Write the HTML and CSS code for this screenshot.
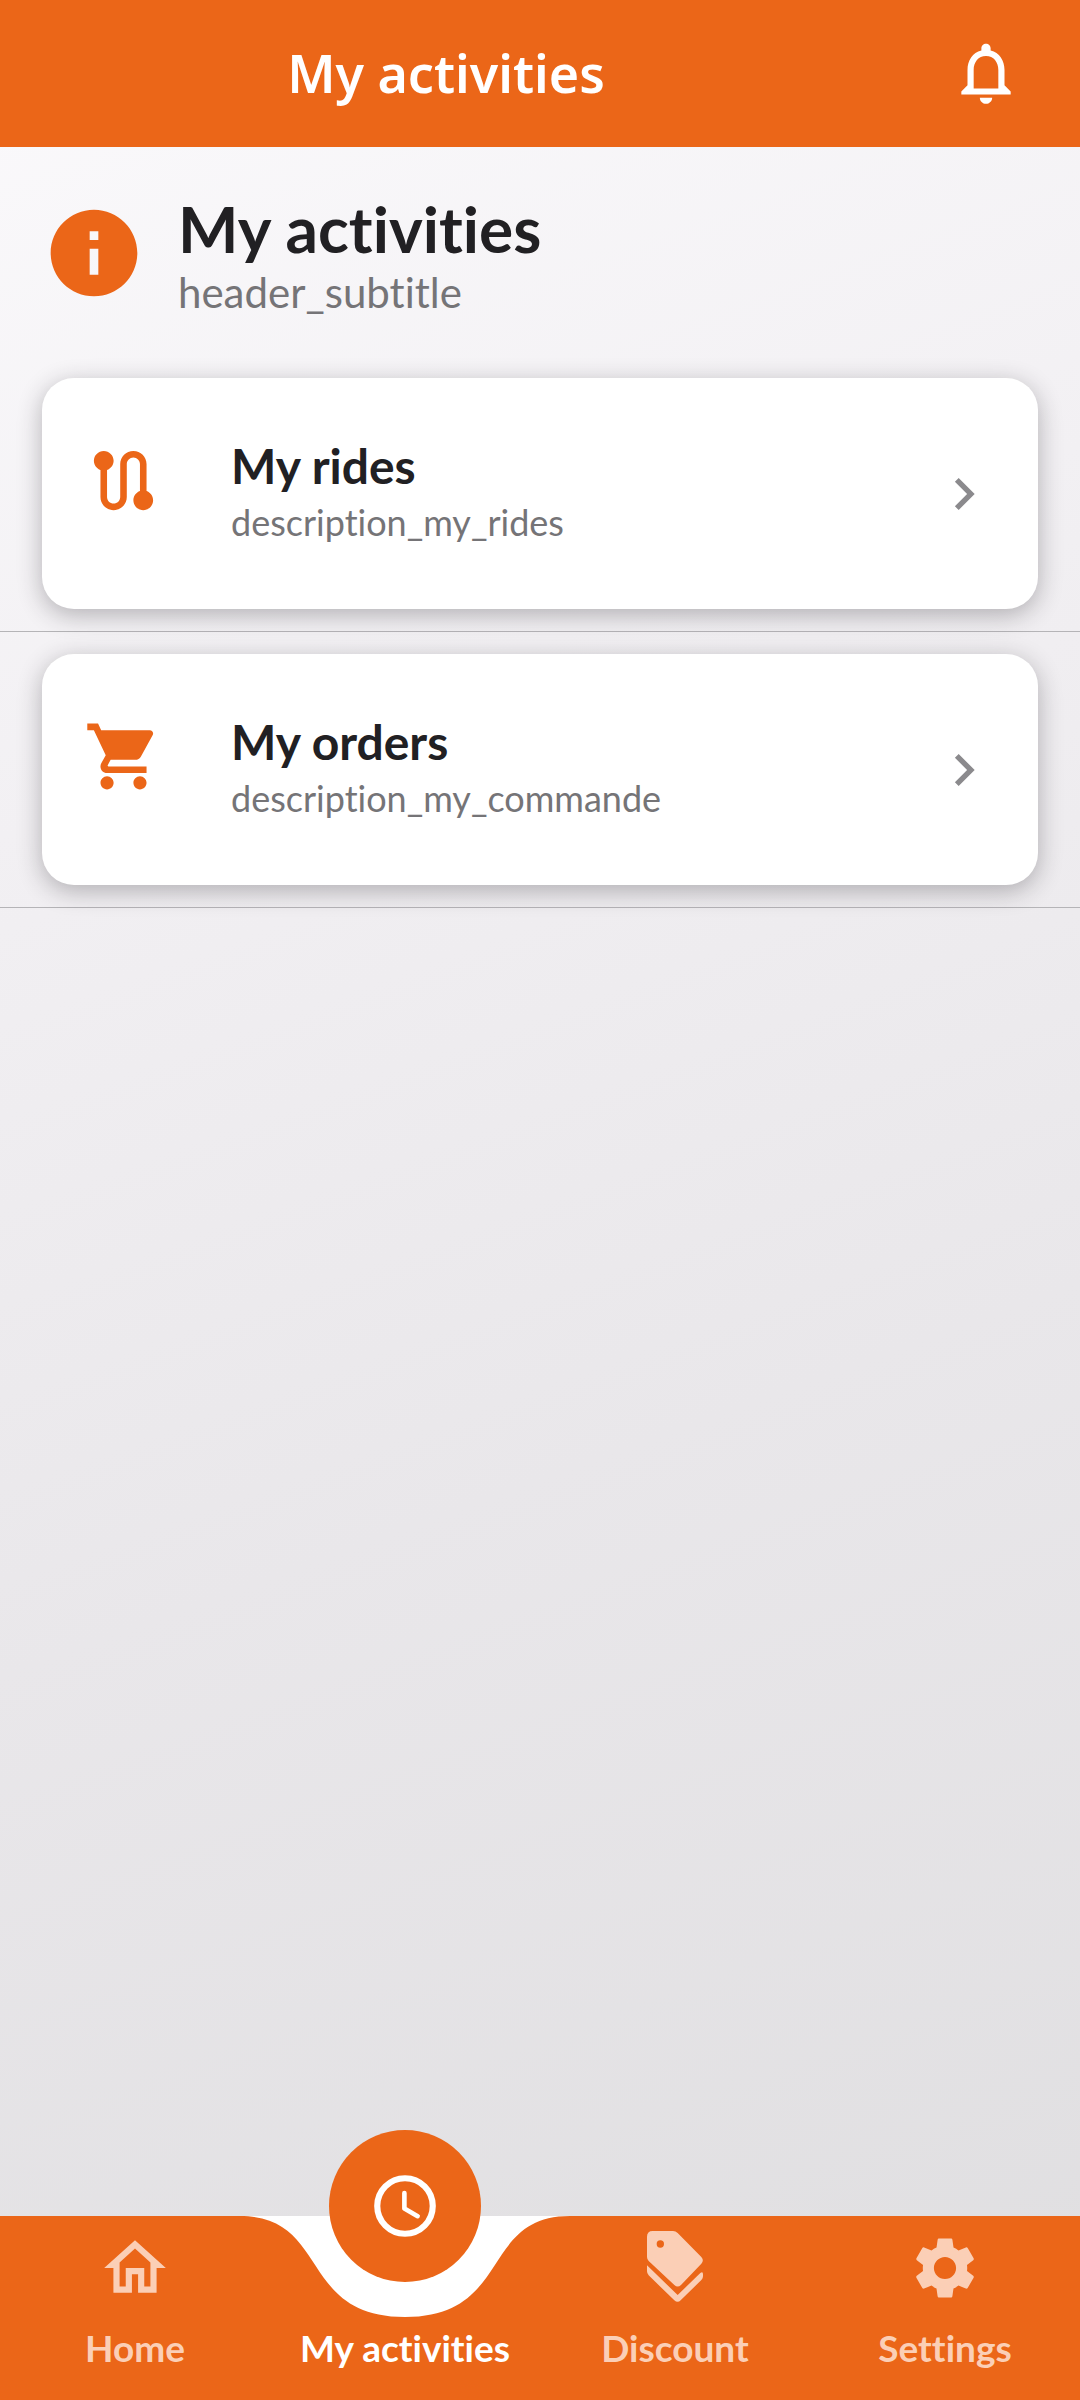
FILE: index.html
```
<!DOCTYPE html>
<html lang="en">
<head>
<meta charset="utf-8">
<meta name="viewport" content="width=device-width, initial-scale=1">
<title>My activities</title>
<link rel="stylesheet" href="styles.css">
</head>
<body>
<div class="app">
  <header class="app-bar">
    <p class="app-bar-title">My activities</p>
    <button class="app-bar-action" type="button" aria-label="Notifications">
      <svg class="icon-medium" viewBox="0 0 24 24" aria-hidden="true"><path d="M12 22c1.1 0 2-.9 2-2h-4c0 1.1.9 2 2 2zm6-6v-5c0-3.07-1.63-5.64-4.5-6.32V4c0-.83-.67-1.5-1.5-1.5s-1.5.67-1.5 1.5v.68C7.64 5.36 6 7.92 6 11v5l-2 2v1h16v-1l-2-2zm-2 1H8v-6c0-2.48 1.51-4.5 4-4.5s4 2.02 4 4.5v6z"/></svg>
    </button>
  </header>

  <main class="content">
    <section class="intro">
      <svg class="intro-icon" viewBox="0 0 24 24" aria-hidden="true"><path d="M12 2C6.48 2 2 6.48 2 12s4.480 10 10 10 10-4.480 10-10S17.520 2 12 2zm1 15h-2v-6h2v6zm0-8h-2V7h2v2z"/></svg>
      <div class="intro-text">
        <h1 class="intro-title">My activities</h1>
        <p class="intro-subtitle">header_subtitle</p>
      </div>
    </section>

    <ul class="list">
      <li class="list-item">
        <a class="card" href="#rides">
          <svg class="card-icon" viewBox="0 0 24 24" aria-hidden="true"><path d="M19 15.180V7c0-2.210-1.790-4-4-4s-4 1.790-4 4v10c0 1.100-.900 2-2 2s-2-.900-2-2V8.820C8.160 8.400 9 7.300 9 6c0-1.660-1.340-3-3-3S3 4.340 3 6c0 1.300.840 2.400 2 2.820V17c0 2.210 1.790 4 4 4s4-1.790 4-4V7c0-1.100.900-2 2-2s2 .900 2 2v8.180c-1.160.410-2 1.510-2 2.820 0 1.660 1.340 3 3 3s3-1.340 3-3c0-1.300-.840-2.400-2-2.820z"/></svg>
          <span class="card-text">
            <span class="card-title">My rides</span>
            <span class="card-description">description_my_rides</span>
          </span>
          <svg class="card-chevron" viewBox="0 0 24 24" aria-hidden="true"><path d="M10 6L8.590 7.410 13.170 12l-4.580 4.590L10 18l6-6z"/></svg>
        </a>
      </li>
      <li class="list-item">
        <a class="card" href="#orders">
          <svg class="card-icon" viewBox="0 0 24 24" aria-hidden="true"><path d="M7 18c-1.100 0-1.990.900-1.990 2S5.900 22 7 22s2-.900 2-2-.900-2-2-2zM1 2v2h2l3.600 7.590-1.350 2.450c-.160.280-.250.610-.250.960 0 1.100.900 2 2 2h12v-2H7.420c-.140 0-.250-.110-.250-.250l.030-.120.900-1.630h7.450c.750 0 1.410-.410 1.750-1.030l3.580-6.490c.080-.140.120-.310.120-.480 0-.550-.450-1-1-1H5.210l-.940-2H1zm16 16c-1.100 0-1.990.900-1.990 2s.890 2 1.990 2 2-.900 2-2-.900-2-2-2z"/></svg>
          <span class="card-text">
            <span class="card-title">My orders</span>
            <span class="card-description">description_my_commande</span>
          </span>
          <svg class="card-chevron" viewBox="0 0 24 24" aria-hidden="true"><path d="M10 6L8.590 7.410 13.170 12l-4.580 4.590L10 18l6-6z"/></svg>
        </a>
      </li>
    </ul>
  </main>

  <nav class="tab-bar">
    <a class="tab" href="#home">
      <svg class="icon-medium" viewBox="0 0 24 24" aria-hidden="true"><path d="M12 5.690l5 4.500V18h-2v-6H9v6H7v-7.810l5-4.500M12 3L2 12h3v8h6v-6h2v6h6v-8h3L12 3z"/></svg>
      <span>Home</span>
    </a>
    <a class="tab tab-active" href="#activities" aria-current="page">
      <svg class="tab-notch" viewBox="0 0 330 101" aria-hidden="true"><path d="M0 0C90 0 58 101 165 101S240 0 330 0z"/></svg>
      <span class="tab-bubble">
        <svg class="icon-medium" viewBox="0 0 24 24" aria-hidden="true"><g fill="none" stroke="currentColor"><circle cx="12" cy="12" r="9" stroke-width="2"/><path d="M11.800 7.800V12.800L16.100 15.300" stroke-width="1.500" stroke-linecap="round" stroke-linejoin="round"/></g></svg>
      </span>
      <span>My activities</span>
    </a>
    <a class="tab" href="#discount">
      <svg class="icon-medium" viewBox="0 0 222 222" aria-hidden="true"><g transform="translate(27 0)"><path fill-rule="evenodd" d="M17 0H78Q86 0 92 6L163 78Q172 88 163 98L102 162Q92 171 82 162L5 90Q0 85 0 78V17Q0 0 17 0zM40 28a11 11 0 1 0 0 22a11 11 0 1 0 0-22z"/><path d="M0 103L92 192L160 126Q168 120 168 130V136Q168 142 163 147L101 208Q92 217 82 208L5 133Q0 128 0 121z"/></g></svg>
      <span>Discount</span>
    </a>
    <a class="tab" href="#settings">
      <svg class="icon-medium" viewBox="0 0 24 24" aria-hidden="true"><path d="M19.140 12.940c.040-.300.060-.610.060-.940 0-.320-.020-.640-.070-.940l2.030-1.580c.180-.140.230-.410.120-.610l-1.920-3.320c-.120-.220-.370-.290-.590-.220l-2.390.960c-.500-.380-1.030-.700-1.620-.940L14.400 2.810c-.040-.240-.240-.410-.480-.410h-3.840c-.240 0-.430.170-.470.410L9.250 5.350C8.660 5.590 8.120 5.920 7.630 6.290L5.240 5.330c-.220-.080-.470 0-.590.220L2.740 8.870c-.120.210-.080.470.120.610l2.030 1.580C4.840 11.360 4.800 11.690 4.800 12s.020.640.070.940l-2.030 1.580c-.180.140-.230.410-.120.610l1.920 3.320c.120.220.370.290.590.220l2.390-.960c.500.380 1.030.700 1.620.940l.360 2.540c.050.240.240.410.480.410h3.840c.240 0 .440-.170.470-.410l.360-2.540c.590-.240 1.130-.560 1.620-.940l2.390.960c.220.080.470 0 .590-.220l1.920-3.320c.120-.220.070-.470-.120-.610L19.140 12.940zM12 15.600c-1.980 0-3.600-1.620-3.600-3.600s1.620-3.600 3.600-3.600 3.600 1.620 3.600 3.600-1.620 3.600-3.600 3.600z"/></svg>
      <span>Settings</span>
    </a>
  </nav>
</div>
</body>
</html>
```
FILE: styles.css
```
:root {
  --orange: #eb6618;
  --ink: #212023;
  --muted: #757477;
  --tab-idle: #fbcfb6;
}

* {
  box-sizing: border-box;
}

body,
h1,
p,
ul {
  margin: 0;
  padding: 0;
}

body {
  font-family: Lato, "Liberation Sans", sans-serif;
  font-variant-ligatures: none;
  color: var(--ink);
}

a {
  color: inherit;
  text-decoration: none;
}

svg {
  display: block;
  flex: none;
  fill: currentColor;
}

.app {
  display: flex;
  flex-direction: column;
  min-height: 100vh;
  background: linear-gradient(160deg, #fbfafc 0%, #f2f0f3 30%, #e9e7ea 60%, #dfdee0 100%);
}

.icon-medium {
  width: 74px;
  height: 74px;
}

/* Top bar */
.app-bar {
  display: flex;
  align-items: center;
  height: 147px;
  padding-bottom: 2px;
  background: var(--orange);
  color: #fff;
}

.app-bar-title {
  flex: 1;
  font-family: "Noto Sans", "Open Sans", sans-serif;
  font-size: 52px;
  font-weight: 600;
  line-height: 72px;
  text-align: center;
}

.app-bar-action {
  display: flex;
  justify-content: center;
  width: 188px;
  padding: 0;
  border: 0;
  background: none;
  color: inherit;
}

/* Page content */
.content {
  flex: 1;
}

.intro {
  display: flex;
  align-items: center;
  gap: 32px;
  height: 209px;
  padding: 2px 42px 0;
}

.intro-icon {
  width: 104px;
  height: 104px;
  color: var(--orange);
}

.intro-text {
  padding-top: 4px;
}

.intro-title {
  font-size: 64px;
  font-weight: 700;
  line-height: 74px;
}

.intro-subtitle {
  color: var(--muted);
  font-size: 42px;
  line-height: 52px;
}

.list {
  list-style: none;
}

.list-item {
  padding: 22px 42px;
  border-bottom: 1px solid #b5b4b7;
}

.card {
  display: flex;
  align-items: center;
  height: 231px;
  padding: 0 42px;
  border-radius: 32px;
  background: #fff;
  box-shadow: 0 6px 24px rgba(40, 36, 44, 0.32);
}

.card-icon {
  width: 79px;
  height: 79px;
  margin-bottom: 26px;
  color: var(--orange);
}

.card-text {
  display: flex;
  flex: 1;
  flex-direction: column;
  margin: 0 0 4px 68px;
}

.card-title {
  font-size: 48px;
  font-weight: 700;
  line-height: 60px;
}

.card-description {
  color: var(--muted);
  font-size: 36px;
  line-height: 52px;
}

.card-chevron {
  width: 64px;
  height: 64px;
  color: #8b8a8d;
}

/* Bottom navigation */
.tab-bar {
  display: grid;
  grid-template-columns: repeat(4, 1fr);
  height: 184px;
  background: var(--orange);
  color: var(--tab-idle);
  font-size: 37px;
  font-weight: 700;
  line-height: 44px;
}

.tab {
  position: relative;
  display: flex;
  flex-direction: column;
  align-items: center;
  justify-content: space-between;
  padding: 15px 0 30px;
}

.tab-active {
  justify-content: flex-end;
  color: #fff;
}

.tab-notch {
  position: absolute;
  top: 0;
  left: 50%;
  width: 330px;
  height: 101px;
  margin-left: -165px;
}

.tab-bubble {
  position: absolute;
  top: -86px;
  left: 50%;
  display: flex;
  align-items: center;
  justify-content: center;
  width: 152px;
  height: 152px;
  margin-left: -76px;
  border-radius: 50%;
  background: var(--orange);
}
```
